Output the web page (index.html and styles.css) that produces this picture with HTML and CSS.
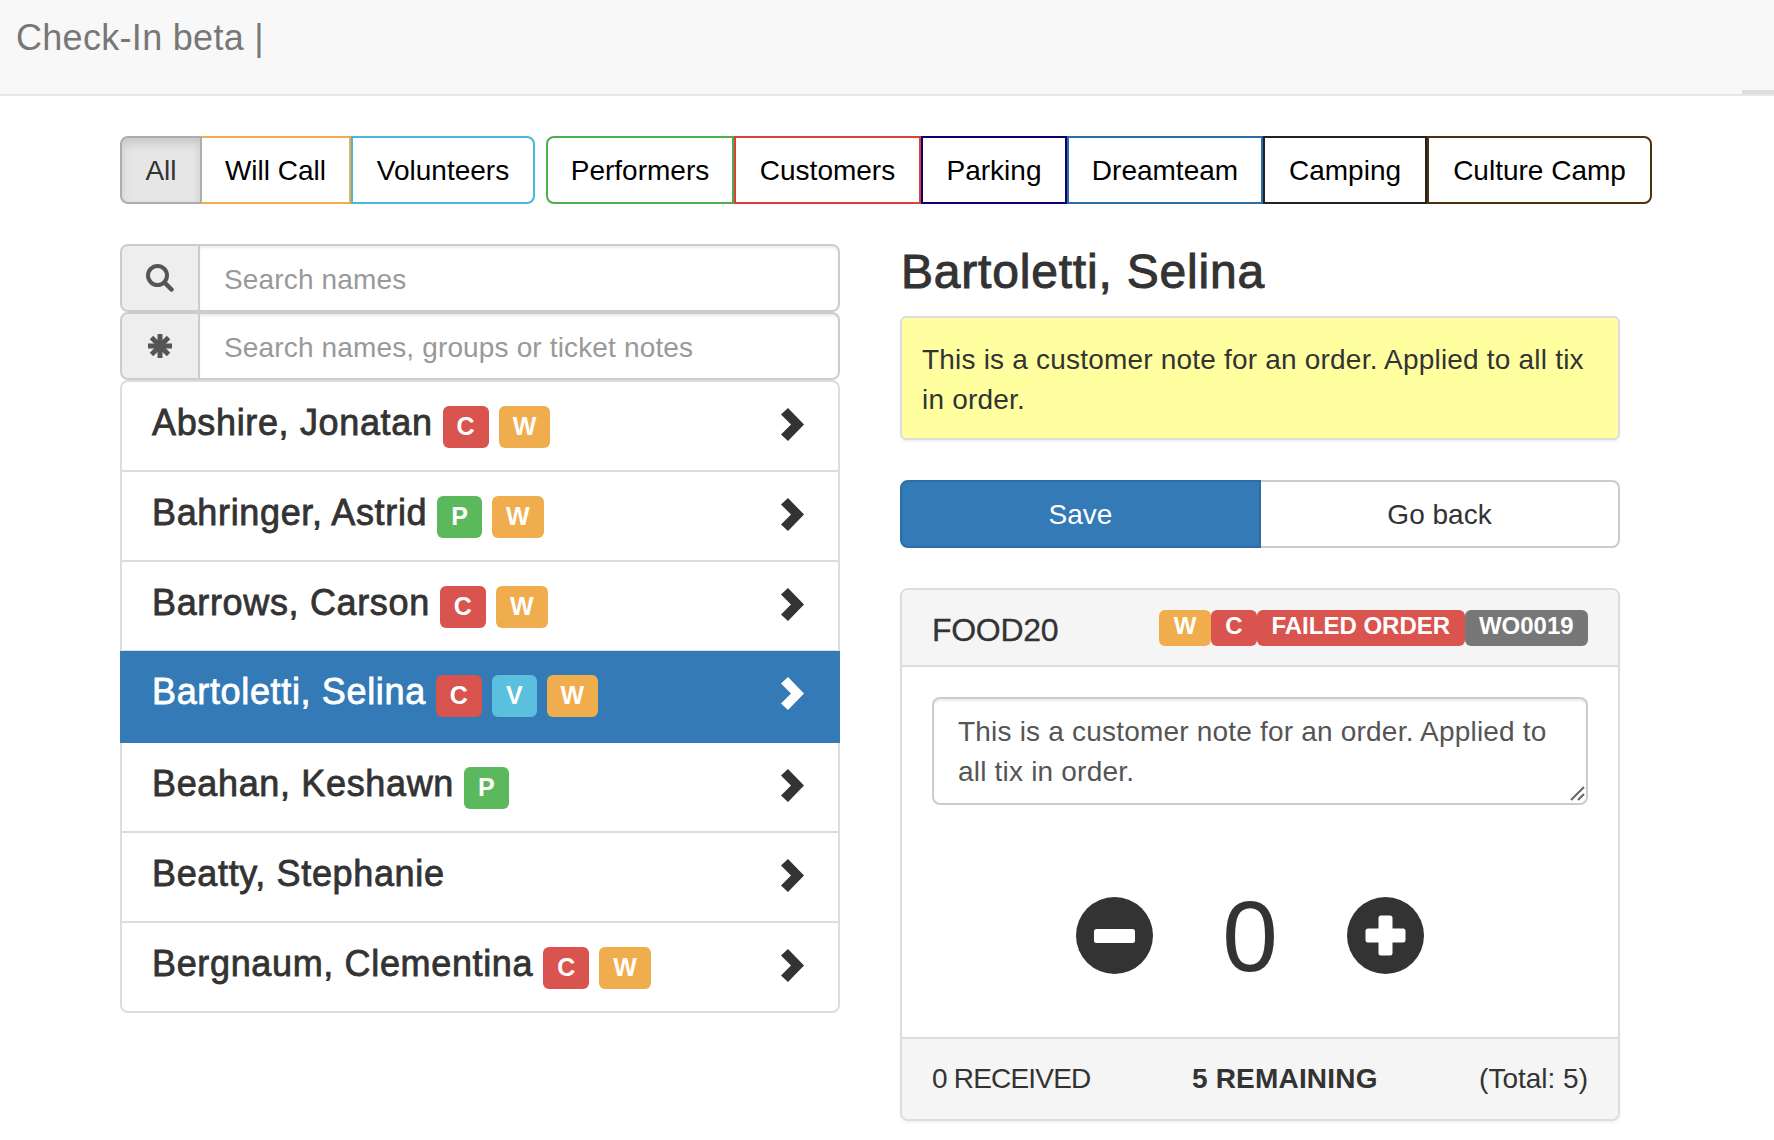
FILE: index.html
```html
<!DOCTYPE html>
<html lang="en">
<head>
<meta charset="utf-8">
<title>Check-In</title>
<link rel="stylesheet" href="styles.css">
</head>
<body>
<nav class="navbar"><span class="brand">Check-In beta |</span><span class="nav-tab"></span></nav>
<main class="page">
  <div class="filters">
    <div class="btn-group">
      <button class="fbtn active">All</button>
      <button class="fbtn c-orange">Will Call</button>
      <button class="fbtn c-cyan">Volunteers</button>
    </div>
    <div class="btn-group">
      <button class="fbtn c-green">Performers</button>
      <button class="fbtn c-red">Customers</button>
      <button class="fbtn c-navy">Parking</button>
      <button class="fbtn c-blue">Dreamteam</button>
      <button class="fbtn c-black">Camping</button>
      <button class="fbtn c-brown">Culture Camp</button>
    </div>
  </div>
  <div class="columns">
    <section class="left">
      <div class="input-group">
        <span class="addon"><svg class="ico-search" viewBox="0 0 28 28"><circle cx="11.500" cy="11.500" r="9.500" fill="none" stroke="#555" stroke-width="4"/><path d="M18.500 18.500l7 7" stroke="#555" stroke-width="4.500" stroke-linecap="round"/></svg></span>
        <input class="field" placeholder="Search names">
      </div>
      <div class="input-group">
        <span class="addon"><svg class="ico-star" viewBox="0 0 24 24"><g stroke="#555" stroke-width="5"><path d="M12 0v24"/><path d="M0 12h24"/><path d="M3.500 3.500l17 17"/><path d="M20.500 3.500l-17 17"/></g></svg></span>
        <input class="field" placeholder="Search names, groups or ticket notes">
      </div>
      <ul class="list">
        <li class="item"><span class="name">Abshire, Jonatan</span><span class="label red">C</span><span class="label orange">W</span><svg class="chev" viewBox="0 0 23 33"><path d="M0 6.500L7 0l16 16.500L7 33l-7-6.500 10-10z"/></svg></li>
        <li class="item"><span class="name">Bahringer, Astrid</span><span class="label green">P</span><span class="label orange">W</span><svg class="chev" viewBox="0 0 23 33"><path d="M0 6.500L7 0l16 16.500L7 33l-7-6.500 10-10z"/></svg></li>
        <li class="item"><span class="name">Barrows, Carson</span><span class="label red">C</span><span class="label orange">W</span><svg class="chev" viewBox="0 0 23 33"><path d="M0 6.500L7 0l16 16.500L7 33l-7-6.500 10-10z"/></svg></li>
        <li class="item selected"><span class="name">Bartoletti, Selina</span><span class="label red">C</span><span class="label cyan">V</span><span class="label orange">W</span><svg class="chev" viewBox="0 0 23 33"><path d="M0 6.500L7 0l16 16.500L7 33l-7-6.500 10-10z"/></svg></li>
        <li class="item"><span class="name">Beahan, Keshawn</span><span class="label green">P</span><svg class="chev" viewBox="0 0 23 33"><path d="M0 6.500L7 0l16 16.500L7 33l-7-6.500 10-10z"/></svg></li>
        <li class="item"><span class="name">Beatty, Stephanie</span><svg class="chev" viewBox="0 0 23 33"><path d="M0 6.500L7 0l16 16.500L7 33l-7-6.500 10-10z"/></svg></li>
        <li class="item"><span class="name">Bergnaum, Clementina</span><span class="label red">C</span><span class="label orange">W</span><svg class="chev" viewBox="0 0 23 33"><path d="M0 6.500L7 0l16 16.500L7 33l-7-6.500 10-10z"/></svg></li>
      </ul>
    </section>
    <section class="right">
      <h2 class="title">Bartoletti, Selina</h2>
      <div class="note">This is a customer note for an order. Applied to all tix in order.</div>
      <div class="actions">
        <button class="act save">Save</button>
        <button class="act back">Go back</button>
      </div>
      <div class="panel">
        <header class="panel-head">
          <span class="code">FOOD20</span>
          <span class="tags"><span class="tag orange">W</span><span class="tag red">C</span><span class="tag red">FAILED ORDER</span><span class="tag gray">WO0019</span></span>
        </header>
        <div class="panel-body">
          <div class="note-wrap">
            <textarea class="note-edit" rows="2">This is a customer note for an order. Applied to all tix in order.</textarea>
            <svg class="grip" viewBox="0 0 15 15"><path d="M1 14L14 1M8 14l6-6" stroke="#666" stroke-width="2" fill="none"/></svg>
          </div>
          <div class="counter">
            <svg class="round" viewBox="0 0 77 77"><circle cx="38.500" cy="38.500" r="38.500" fill="#333"/><rect x="18" y="32" width="41" height="14" rx="2.500" fill="#fff"/></svg>
            <span class="count">0</span>
            <svg class="round" viewBox="0 0 77 77"><circle cx="38.500" cy="38.500" r="38.500" fill="#333"/><path d="M31.500 21a2.500 2.500 0 0 1 2.500-2.500h9a2.500 2.500 0 0 1 2.500 2.500v10.500h10.500a2.500 2.500 0 0 1 2.500 2.500v9a2.500 2.500 0 0 1-2.500 2.500h-10.500v10.500a2.500 2.500 0 0 1-2.500 2.500h-9a2.500 2.500 0 0 1-2.500-2.500v-10.500h-10.500a2.500 2.500 0 0 1-2.500-2.500v-9a2.500 2.500 0 0 1 2.500-2.500h10.500z" fill="#fff"/></svg>
          </div>
        </div>
        <footer class="panel-foot">
          <span class="received">0 RECEIVED</span>
          <strong class="remaining">5 REMAINING</strong>
          <span>(Total: 5)</span>
        </footer>
      </div>
    </section>
  </div>
</main>
</body>
</html>
```
FILE: styles.css
```css
* { box-sizing: border-box; }
html, body { margin: 0; padding: 0; height: 1140px; overflow: hidden; }
body { background: #fff; color: #333; font-family: "Liberation Sans", Arial, sans-serif; font-size: 28px; line-height: 40px; }

.navbar { height: 96px; background: #f8f8f8; border-bottom: 2px solid #e7e7e7; padding: 18px 16px 0; position: relative; }
.brand { color: #777; font-size: 36px; line-height: 40px; display: block; letter-spacing: .3px; }
.nav-tab { position: absolute; right: 0; bottom: 0; width: 32px; height: 4px; background: #ddd; }

.page { padding: 40px 120px 0; }
.filters { display: flex; gap: 11px; }
.btn-group { display: flex; }
.fbtn { height: 68px; padding: 2px 0 0; margin: 0; font: inherit; color: #000; background: #fff; border: 2px solid #ccc; border-left-width: 0; border-radius: 0; white-space: nowrap; text-align: center; }
.fbtn:first-child { border-left-width: 2px; border-radius: 8px 0 0 8px; }
.fbtn:last-child { border-radius: 0 8px 8px 0; }
.active { width: 82px; background: #e6e6e6; color: #333; border-color: #adadad; box-shadow: inset 0 6px 10px rgba(0,0,0,.125); }
.c-orange { width: 149px; border-color: #f0ad4e; }
.c-cyan { width: 184px; border-color: #46b8da; border-left-width: 2px; }
.c-green { width: 188px; border-color: #4cae4c; }
.c-red { width: 187px; border-color: #d9403c; border-left-width: 2px; }
.c-navy { width: 146px; border-color: #0b0070; border-left-width: 2px; }
.c-blue { width: 196px; border-color: #2e6da4; border-left-width: 2px; }
.c-black { width: 164px; border-color: #222; border-left-width: 2px; }
.c-brown { width: 225px; border-color: #4f3010; border-left-width: 2px; }

.columns { display: flex; gap: 60px; margin-top: 32px; }
.left { width: 720px; flex: none; padding-top: 8px; }
.right { width: 720px; flex: none; }

.input-group { display: flex; height: 68px; }
.addon { width: 80px; flex: none; background: #eee; border: 2px solid #ccc; border-radius: 8px 0 0 8px; display: flex; align-items: center; justify-content: center; }
.ico-search { width: 28px; height: 28px; }
.ico-star { width: 24px; height: 24px; }
.field { flex: 1; min-width: 0; border: 2px solid #ccc; border-left-width: 0; border-radius: 0 8px 8px 0; padding: 14px 24px 10px; font: inherit; color: #555; background: #fff; box-shadow: inset 0 2px 2px rgba(0,0,0,.075); outline: 0; letter-spacing: .15px; }
.field::placeholder { color: #999; opacity: 1; }

.list { list-style: none; margin: 0; padding: 0; }
.item { height: 90px; border: 2px solid #ddd; border-top-width: 0; padding: 20px 30px 0 30px; display: flex; align-items: flex-start; }
.item:first-child { border-top-width: 2px; border-radius: 8px 8px 0 0; height: 92px; }
.item:last-child { border-radius: 0 0 8px 8px; }
.selected { background: #337ab7; border-color: #337ab7; color: #fff; height: 92px; margin-top: -1px; }
.name { font-size: 36px; line-height: 40px; -webkit-text-stroke: .8px currentColor; letter-spacing: .65px; margin-right: 10px; padding-top: 1px; }
.label { font-size: 25px; line-height: 26px; font-weight: 700; color: #fff; padding: 7px 14px 9px; border-radius: 6px; margin: 4px 10px 0 0; }
.red { background: #d9534f; }
.orange { background: #f0ad4e; }
.green { background: #5cb85c; }
.cyan { background: #5bc0de; }
.gray { background: #777; }
.chev { width: 23px; height: 33px; margin-left: auto; margin-right: 4px; margin-top: 6px; fill: #333; flex: none; }
.selected .chev { fill: #fff; }

.title { margin: 0 0 0 1px; height: 72px; font-size: 48px; line-height: 60px; font-weight: 400; -webkit-text-stroke: 1px currentColor; letter-spacing: .8px; padding-top: 6px; }
.note { margin-top: 8px; height: 124px; background: #ffffa0; border: 2px solid #ddd; border-radius: 6px; padding: 22px 20px 0; box-shadow: 0 2px 2px rgba(0,0,0,.05); color: #333; letter-spacing: .2px; }
.actions { display: flex; margin-top: 40px; }
.act { flex: 1; height: 68px; font: inherit; margin: 0; padding: 2px 0 0; }
.save { background: #337ab7; color: #fff; border: 2px solid #2e6da4; border-radius: 8px 0 0 8px; }
.back { background: #fff; color: #333; border: 2px solid #ccc; border-left-width: 0; border-radius: 0 8px 8px 0; }

.panel { margin-top: 40px; border: 2px solid #ddd; border-radius: 8px; height: 533px; display: flex; flex-direction: column; overflow: hidden; box-shadow: 0 2px 2px rgba(0,0,0,.05); }
.panel-head { height: 77px; flex: none; background: #f5f5f5; border-bottom: 2px solid #ddd; padding: 20px 30px 0; display: flex; justify-content: space-between; align-items: flex-start; }
.code { font-size: 32px; line-height: 36px; -webkit-text-stroke: .3px currentColor; letter-spacing: -.3px; padding-top: 2px; }
.tags { display: flex; }
.tag { font-size: 24px; line-height: 24px; font-weight: 700; color: #fff; padding: 4px 14.4px 8px; border-radius: 6px; height: 36px; }
.panel-body { flex: 1; padding: 30px 30px 0; }
.note-wrap { position: relative; height: 108px; }
.note-edit { display: block; width: 100%; height: 108px; border: 2px solid #ccc; border-radius: 8px; padding: 13px 24px 11px; font: inherit; color: #555; resize: none; outline: 0; box-shadow: inset 0 2px 2px rgba(0,0,0,.075); overflow: hidden; letter-spacing: .2px; }
.grip { position: absolute; right: 3px; bottom: 4px; width: 15px; height: 15px; }
.counter { display: flex; align-items: flex-start; margin-top: 92px; padding-left: 144px; }
.round { width: 77px; height: 77px; flex: none; }
.count { width: 194px; font-size: 100px; line-height: 78px; text-align: center; }
.panel-foot { height: 82px; flex: none; background: #f5f5f5; border-top: 2px solid #ddd; padding: 20px 30px 0; display: flex; justify-content: space-between; }
.received { letter-spacing: -.8px; }
.remaining { font-weight: 700; letter-spacing: .2px; }
```
